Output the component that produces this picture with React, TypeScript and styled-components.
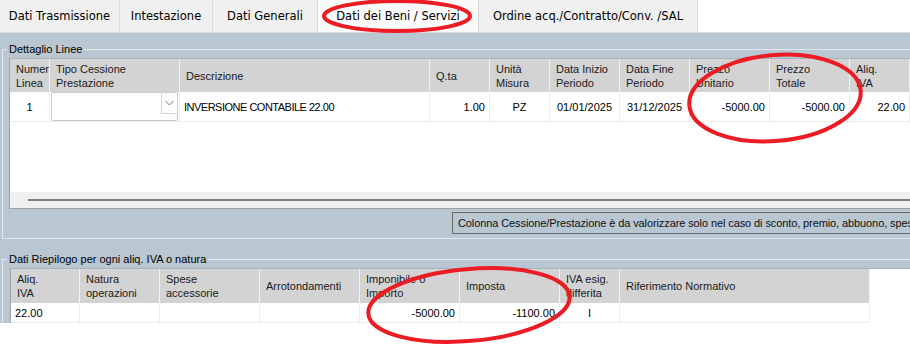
import styled, { createGlobalStyle } from "styled-components";

const GlobalStyle = createGlobalStyle`
  html, body {
    margin: 0;
    padding: 0;
    background: #fff;
    overflow: hidden;
  }
  * {
    box-sizing: border-box;
  }
`;

const Page = styled.div`
  position: relative;
  width: 910px;
  height: 346px;
  overflow: hidden;
  background: #fff;
  font-family: "Liberation Sans", Arial, sans-serif;
  font-size: 11px;
  color: #000;
`;

const TabBar = styled.div`
  display: flex;
  height: 33px;
  border-bottom: 1px solid #dadada;
  background: #fff;
`;

const Tab = styled.div<{ $w: number; $active?: boolean }>`
  flex: none;
  width: ${(p) => p.$w}px;
  display: flex;
  align-items: center;
  justify-content: center;
  font-family: "DejaVu Sans", Tahoma, sans-serif;
  font-size: 11.5px;
  background: ${(p) => (p.$active ? "#fafafa" : "#f0f0f0")};
  border-right: 1px solid #dadada;
`;

const Body = styled.div`
  height: 290px;
  overflow: hidden;
  background: #b9c7d2;
  padding-top: 9px;
`;

const GroupBox = styled.fieldset<{ $mt: number }>`
  margin: ${(p) => p.$mt}px 0 0 2px;
  padding: 0 0 4px 0;
  width: 1000px;
  min-width: 0;
  border: 1px solid #e2e8ed;
`;

const GroupTitle = styled.legend`
  margin-left: 4px;
  padding: 0 2px;
  line-height: 14px;
  font-size: 11px;
  color: #000;
`;

const Grid = styled.div<{ $ml: number; $mt: number }>`
  margin: ${(p) => p.$mt}px 0 0 ${(p) => p.$ml}px;
  display: flex;
  flex-direction: column;
  background: #fff;
  border-top: 1px solid #a9b3bb;
  border-left: 1px solid #a0a0a0;
`;

const Row = styled.div<{ $h: number }>`
  display: flex;
  height: ${(p) => p.$h}px;
  flex: none;
`;

const HeadCell = styled.div<{ $w: number }>`
  flex: none;
  width: ${(p) => p.$w}px;
  display: flex;
  align-items: center;
  padding: 0 2px 0 6px;
  background: #d3d3d3;
  border-right: 1px solid #f2f2f2;
  line-height: 14px;
  white-space: pre;
  overflow: hidden;
  color: #1a1a1a;
`;

const Cell = styled.div<{ $w: number; $align?: "left" | "center" | "right"; $tight?: boolean }>`
  flex: none;
  width: ${(p) => p.$w}px;
  display: flex;
  align-items: center;
  justify-content: ${(p) =>
    p.$align === "right" ? "flex-end" : p.$align === "center" ? "center" : "flex-start"};
  padding: 0 4px;
  border-right: 1px solid #ececec;
  border-bottom: 1px solid #ececec;
  white-space: nowrap;
  overflow: hidden;
  letter-spacing: ${(p) => (p.$tight ? "-0.5px" : "0")};
`;

const ComboCell = styled.div<{ $w: number }>`
  flex: none;
  width: ${(p) => p.$w}px;
  padding: 0 1px 1px 1px;
  border-right: 1px solid #ececec;
  border-bottom: 1px solid #ececec;
`;

const Combo = styled.div`
  height: 29px;
  border: 1px solid #cacaca;
  border-radius: 2px;
  background: #fff;
  display: flex;
  justify-content: flex-end;
  align-items: flex-start;
`;

const ComboButton = styled.div`
  width: 16px;
  height: 21px;
  border-left: 1px solid #d6d6d6;
  border-bottom: 1px solid #d6d6d6;
  display: flex;
  align-items: center;
  justify-content: center;
`;

const Filler = styled.div<{ $h: number }>`
  height: ${(p) => p.$h}px;
  flex: none;
`;

const HScroll = styled.div`
  height: 17px;
  flex: none;
  background: #f0f0f0;
  border-bottom: 1px solid #a0a0a0;
  padding: 7px 0 0 18px;
`;

const ScrollThumb = styled.div`
  height: 2px;
  background: #808080;
`;

const Hint = styled.div`
  margin: 3px 0 0 449px;
  height: 22px;
  display: flex;
  align-items: center;
  padding: 0 5px;
  border: 1px solid #6b6b6b;
  white-space: nowrap;
  font-size: 11px;
  letter-spacing: -0.1px;
  color: #111;
`;

const Annotations = styled.svg`
  position: absolute;
  left: 0;
  top: 0;
  pointer-events: none;
`;

type Col = {
  w: number;
  title: string;
  value?: string;
  align?: "left" | "center" | "right";
  tight?: boolean;
};

const tabs = [
  { label: "Dati Trasmissione", w: 120 },
  { label: "Intestazione", w: 93 },
  { label: "Dati Generali", w: 105 },
  { label: "Dati dei Beni / Servizi", w: 161, active: true },
  { label: "Ordine acq./Contratto/Conv. /SAL", w: 219 },
];

const lineCols: Col[] = [
  { w: 40, title: "Numero\nLinea", value: "1", align: "center" },
  { w: 130, title: "Tipo Cessione\nPrestazione" },
  { w: 250, title: "Descrizione", value: "INVERSIONE CONTABILE 22.00", tight: true },
  { w: 60, title: "Q.ta", value: "1.00", align: "right" },
  { w: 60, title: "Unità\nMisura", value: "PZ", align: "center" },
  { w: 70, title: "Data Inizio\nPeriodo", value: "01/01/2025", align: "center" },
  { w: 70, title: "Data Fine\nPeriodo", value: "31/12/2025", align: "center" },
  { w: 80, title: "Prezzo\nUnitario", value: "-5000.00", align: "right" },
  { w: 80, title: "Prezzo\nTotale", value: "-5000.00", align: "right" },
  { w: 60, title: "Aliq.\nIVA", value: "22.00", align: "right" },
];

const summaryCols: Col[] = [
  { w: 69, title: "Aliq.\nIVA", value: "22.00" },
  { w: 80, title: "Natura\noperazioni" },
  { w: 100, title: "Spese\naccessorie" },
  { w: 100, title: "Arrotondamenti" },
  { w: 100, title: "Imponibile o\nImporto", value: "-5000.00", align: "right" },
  { w: 100, title: "Imposta", value: "-1100.00", align: "right" },
  { w: 60, title: "IVA esig.\ndifferita", value: "I", align: "center" },
  { w: 250, title: "Riferimento Normativo" },
];

const Chevron = () => (
  <svg width="9" height="6" viewBox="0 0 9 6">
    <path d="M0.5 1 L4.5 5 L8.5 1" fill="none" stroke="#707070" strokeWidth="1" />
  </svg>
);

export default function App() {
  return (
    <Page>
      <GlobalStyle />
      <TabBar>
        {tabs.map((t) => (
          <Tab key={t.label} $w={t.w} $active={t.active}>
            {t.label}
          </Tab>
        ))}
      </TabBar>
      <Body>
        <GroupBox $mt={0}>
          <GroupTitle>Dettaglio Linee</GroupTitle>
          <Grid $ml={6} $mt={2}>
            <Row $h={33}>
              {lineCols.map((c) => (
                <HeadCell key={c.title} $w={c.w}>
                  {c.title}
                </HeadCell>
              ))}
            </Row>
            <Row $h={30}>
              {lineCols.map((c, i) =>
                i === 1 ? (
                  <ComboCell key={c.title} $w={c.w}>
                    <Combo>
                      <ComboButton>
                        <Chevron />
                      </ComboButton>
                    </Combo>
                  </ComboCell>
                ) : (
                  <Cell key={c.title} $w={c.w} $align={c.align} $tight={c.tight}>
                    {c.value}
                  </Cell>
                )
              )}
            </Row>
            <Filler $h={70} />
            <HScroll>
              <ScrollThumb />
            </HScroll>
          </Grid>
          <Hint>
            Colonna Cessione/Prestazione è da valorizzare solo nel caso di sconto, premio, abbuono,
            spesa accessoria
          </Hint>
        </GroupBox>
        <GroupBox $mt={13}>
          <GroupTitle>Dati Riepilogo per ogni aliq. IVA o natura</GroupTitle>
          <Grid $ml={7} $mt={2}>
            <Row $h={34}>
              {summaryCols.map((c) => (
                <HeadCell key={c.title} $w={c.w}>
                  {c.title}
                </HeadCell>
              ))}
            </Row>
            <Row $h={20}>
              {summaryCols.map((c) => (
                <Cell key={c.title} $w={c.w} $align={c.align}>
                  {c.value}
                </Cell>
              ))}
            </Row>
          </Grid>
        </GroupBox>
      </Body>
      <Annotations width="910" height="346" viewBox="0 0 910 346">
        <g fill="none" stroke="#ec1c24" strokeWidth="4">
          <ellipse cx="397" cy="16" rx="73" ry="15" />
          <ellipse cx="775" cy="98" rx="86" ry="43" transform="rotate(-5 775 98)" />
          <ellipse cx="469" cy="305" rx="101" ry="36" transform="rotate(-5 469 305)" />
        </g>
      </Annotations>
    </Page>
  );
}
